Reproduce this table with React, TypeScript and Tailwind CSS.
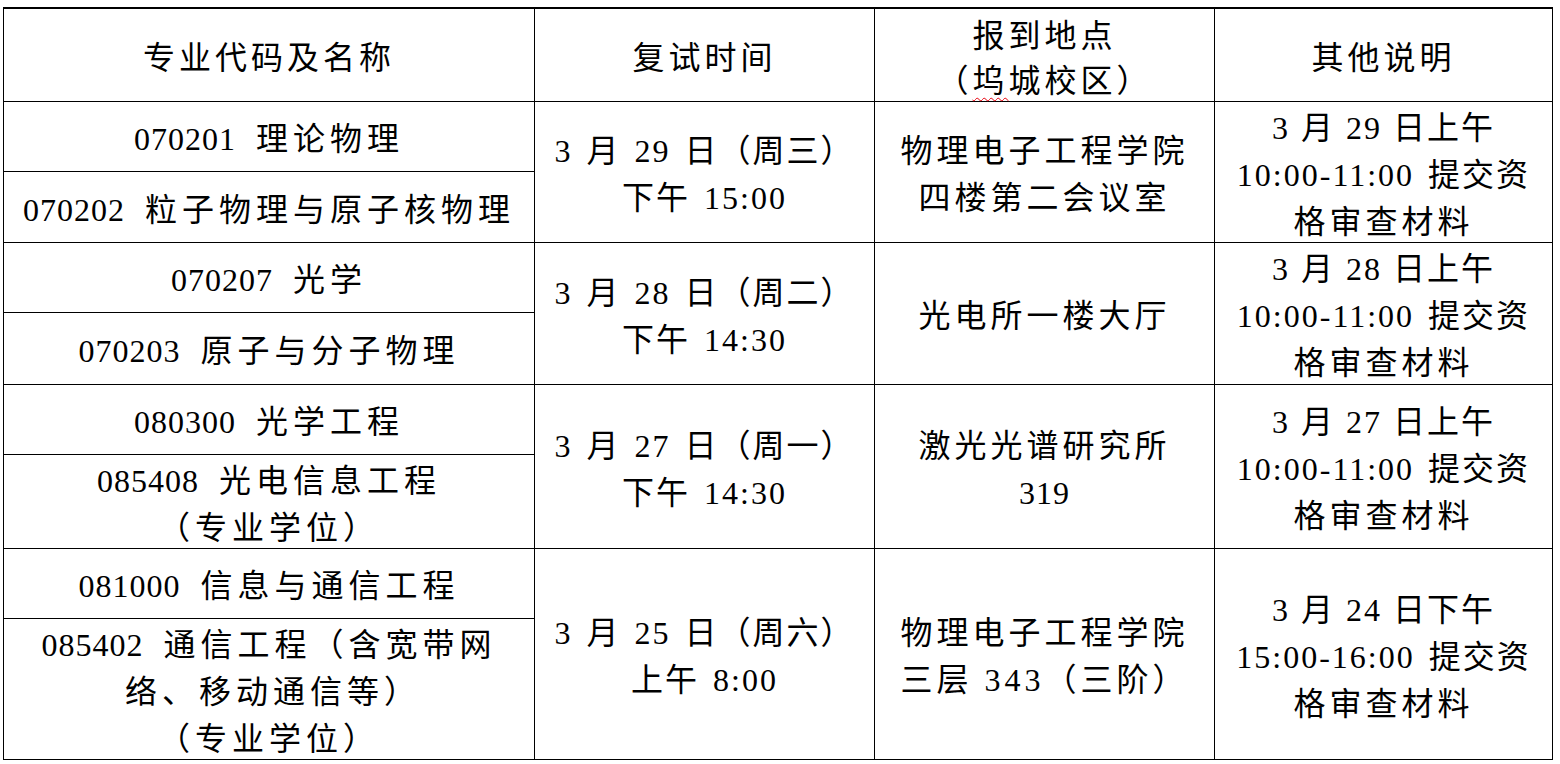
import type { ReactNode } from "react";

// Interview schedule table (复试安排)

const FONT = "font-['Liberation_Serif','Noto_Sans_CJK_SC',serif]";

const Cell = ({
  children,
  span = false,
  className = "",
}: {
  children: ReactNode;
  span?: boolean;
  className?: string;
}) => (
  <div
    className={
      "flex items-center justify-center border-b border-r border-black text-center leading-[47px] " +
      (span ? "row-span-2 " : "") +
      className
    }
  >
    <div className="pt-[6px]">{children}</div>
  </div>
);

const Code = ({ code, name }: { code: string; name: ReactNode }) => (
  <>
    <span className="tracking-[1px]">{code}</span>
    <span className="ml-[20px] tracking-[5px]">{name}</span>
  </>
);

// date / time cells: a little tracking on every glyph and wider spaces
const DT = "tracking-[2px] [word-spacing:4px]";

const Deadline = ({ day, time }: { day: string; time: string }) => (
  <>
    <span className="[word-spacing:1px]">{day}</span>
    <br />
    {time} 提交资
    <br />
    <span className="tracking-[4px]">格审查材料</span>
  </>
);

export default function App() {
  return (
    <div className={"min-h-screen bg-white pl-[3px] pt-[7px] text-[32px] text-black " + FONT}>
      <div className="grid w-[1550px] grid-cols-[531px_340px_340px_338px] grid-rows-[93px_70px_71px_70px_72px_70px_94px_70px_141px] border-l border-t-2 border-black">
        {/* header */}
        <Cell>
          <span className="tracking-[4px]">专业代码及名称</span>
        </Cell>
        <Cell>
          <span className="tracking-[4px]">复试时间</span>
        </Cell>
        <div className="flex items-center justify-center border-b border-r border-black text-center leading-[45px]">
          <div className="pt-[8px] tracking-[4px]">
            报到地点
            <br />
            （<span className="underline decoration-red-600 decoration-wavy decoration-1 underline-offset-[5px]">坞</span>城校区）
          </div>
        </div>
        <Cell>
          <span className="tracking-[4px]">其他说明</span>
        </Cell>

        {/* group 1 */}
        <Cell>
          <Code code="070201" name="理论物理" />
        </Cell>
        <Cell span className={DT}>
          3 月 29 日（周三）
          <br />
          下午 15:00
        </Cell>
        <Cell span className="tracking-[4px]">
          物理电子工程学院
          <br />
          四楼第二会议室
        </Cell>
        <Cell span className={DT}>
          <Deadline day="3 月 29 日上午" time="10:00-11:00" />
        </Cell>
        <Cell>
          <Code code="070202" name="粒子物理与原子核物理" />
        </Cell>

        {/* group 2 */}
        <Cell>
          <Code code="070207" name="光学" />
        </Cell>
        <Cell span className={DT}>
          3 月 28 日（周二）
          <br />
          下午 14:30
        </Cell>
        <Cell span className="tracking-[4px]">
          光电所一楼大厅
        </Cell>
        <Cell span className={DT}>
          <Deadline day="3 月 28 日上午" time="10:00-11:00" />
        </Cell>
        <Cell>
          <Code code="070203" name="原子与分子物理" />
        </Cell>

        {/* group 3 */}
        <Cell>
          <Code code="080300" name="光学工程" />
        </Cell>
        <Cell span className={DT}>
          3 月 27 日（周一）
          <br />
          下午 14:30
        </Cell>
        <Cell span className="tracking-[4px]">
          激光光谱研究所
          <br />
          <span className="tracking-[1px]">319</span>
        </Cell>
        <Cell span className={DT}>
          <Deadline day="3 月 27 日上午" time="10:00-11:00" />
        </Cell>
        <Cell>
          <Code code="085408" name="光电信息工程" />
          <br />
          <span className="tracking-[5px]">（专业学位）</span>
        </Cell>

        {/* group 4 */}
        <Cell>
          <Code code="081000" name="信息与通信工程" />
        </Cell>
        <Cell span className={DT}>
          3 月 25 日（周六）
          <br />
          上午 8:00
        </Cell>
        <Cell span className="tracking-[4px]">
          物理电子工程学院
          <br />
          三层 343（三阶）
        </Cell>
        <Cell span className={DT}>
          <Deadline day="3 月 24 日下午" time="15:00-16:00" />
        </Cell>
        <Cell>
          <Code code="085402" name="通信工程（含宽带网" />
          <br />
          <span className="ml-[8px] tracking-[5px]">络、移动通信等）</span>
          <br />
          <span className="tracking-[5px]">（专业学位）</span>
        </Cell>
      </div>
    </div>
  );
}
